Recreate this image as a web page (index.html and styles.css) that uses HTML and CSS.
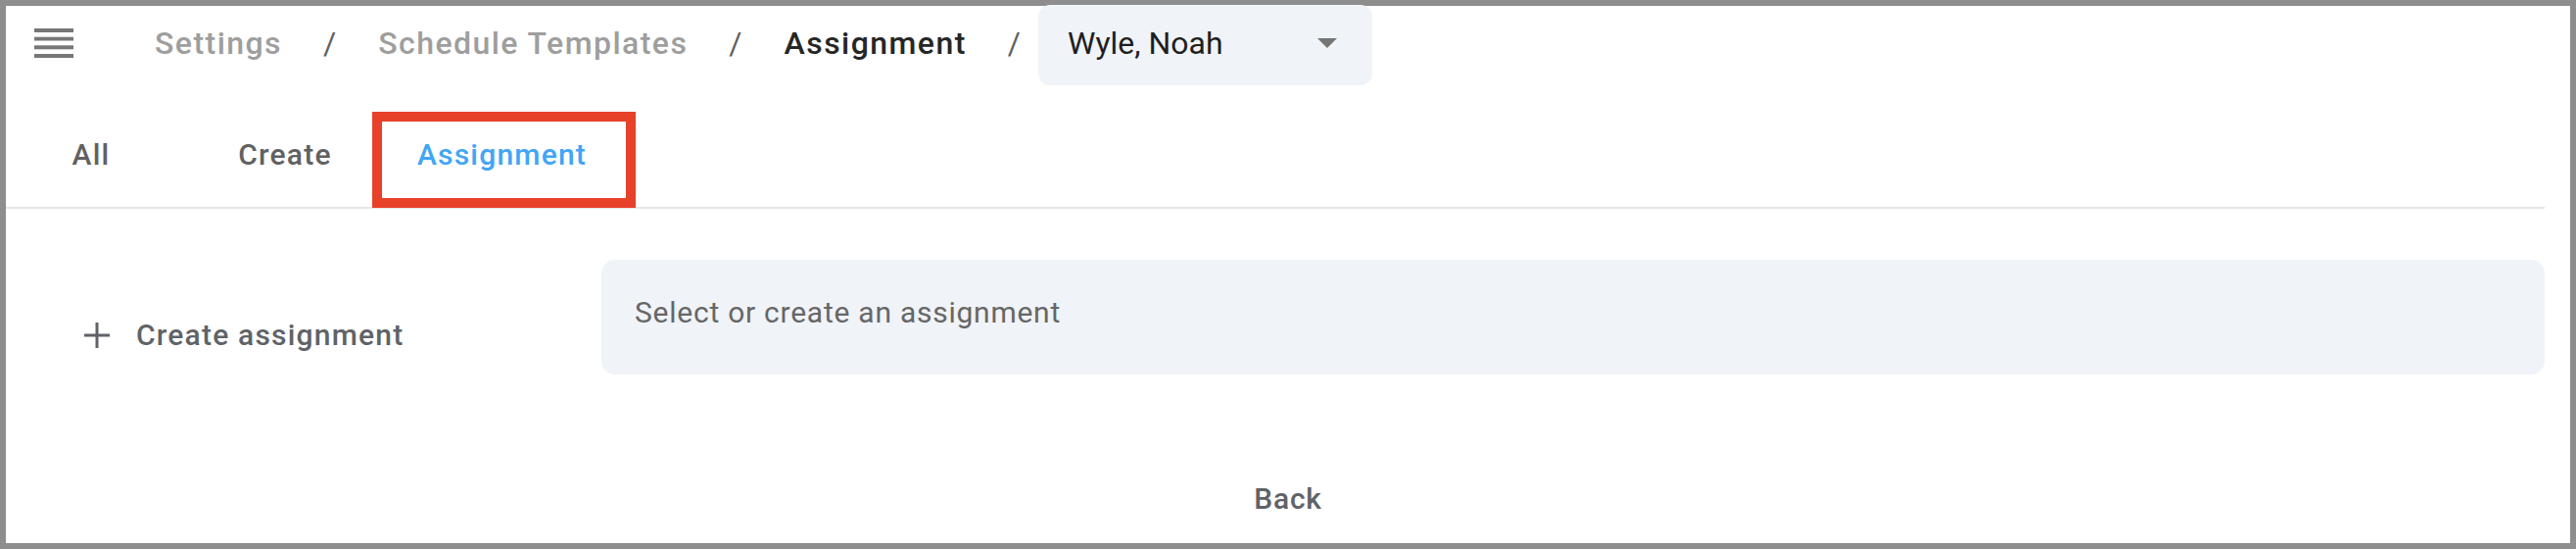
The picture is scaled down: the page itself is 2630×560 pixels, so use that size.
FILE: index.html
```html
<!DOCTYPE html>
<html lang="en">
<head>
<meta charset="utf-8">
<title>Assignment</title>
<link rel="stylesheet" href="styles.css">
</head>
<body>
<div class="frame">
  <header class="topbar">
    <span class="menu-icon" aria-label="Menu">
      <svg width="40" height="30" viewBox="0 0 40 30">
        <rect x="0" y="0" width="40" height="4" fill="#777777"/>
        <rect x="0" y="8.7" width="40" height="3.8" fill="#777777"/>
        <rect x="0" y="17.3" width="40" height="4" fill="#777777"/>
        <rect x="0" y="26" width="40" height="4" fill="#777777"/>
      </svg>
    </span>
    <nav class="crumbs">
      <span class="crumb">Settings</span>
      <span class="sep">/</span>
      <span class="crumb">Schedule Templates</span>
      <span class="sep">/</span>
      <span class="crumb crumb-current">Assignment</span>
      <span class="sep sep-last">/</span>
      <div class="picker">
        <span class="picker-value">Wyle, Noah</span>
        <span class="caret"></span>
      </div>
    </nav>
  </header>

  <div class="tabbar">
    <div class="tabs">
      <div class="tab">All</div>
      <div class="tab">Create</div>
      <div class="tab tab-active">Assignment<span class="highlight"></span></div>
    </div>
  </div>

  <section class="content">
    <div class="side">
      <button class="create-btn">
        <svg class="plus" width="26" height="26" viewBox="0 0 26 26">
          <rect x="11.5" y="0" width="3" height="26" fill="#5f6368"/>
          <rect x="0" y="11.5" width="26" height="3" fill="#5f6368"/>
        </svg>
        <span>Create assignment</span>
      </button>
    </div>
    <div class="select-box">Select or create an assignment</div>
  </section>

  <footer class="footer">
    <button class="back-btn">Back</button>
  </footer>
</div>
</body>
</html>
```
FILE: styles.css
```css
* { box-sizing: border-box; }

html, body {
  margin: 0;
  padding: 0;
  background: #ffffff;
}

body {
  font-family: Roboto, "Liberation Sans", Arial, sans-serif;
}

.frame {
  width: 2630px;
  height: 560px;
  border: 6px solid #8e8e8e;
  display: flex;
  flex-direction: column;
  background: #ffffff;
}

/* ---------- top bar ---------- */
.topbar {
  height: 79px;
  display: flex;
  align-items: center;
  padding-left: 29px;
  padding-bottom: 3px;
}

.menu-icon {
  display: flex;
  width: 40px;
  height: 30px;
  margin-right: 83px;
}

.crumbs {
  display: flex;
  align-items: center;
  height: 100%;
  font-size: 32px;
  letter-spacing: 1.45px;
}

.crumb {
  color: #9e9e9e;
  font-weight: 500;
}

.crumb-current {
  color: #262626;
}

.sep {
  color: #616161;
  font-weight: 400;
  letter-spacing: 0;
  margin: 0 43px 0 42px;
}

.sep-last {
  margin-right: 18px;
}

.picker {
  height: 82px;
  margin-bottom: -3px;
  width: 341px;
  background: #f0f3f8;
  border-radius: 12px;
  display: flex;
  align-items: center;
  justify-content: space-between;
  padding: 0 36px 0 30px;
}

.picker-value {
  color: #1f1f1f;
  font-weight: 400;
  letter-spacing: 0;
  padding-bottom: 3px;
}

.caret {
  width: 0;
  height: 0;
  border-left: 10px solid transparent;
  border-right: 10px solid transparent;
  border-top: 10px solid #757575;
  margin-bottom: 4px;
}

/* ---------- tabs ---------- */
.tabbar {
  margin-top: 29px;
  margin-right: 26px;
  border-bottom: 2px solid #e6e6e6;
}

.tabs {
  display: flex;
  margin-left: -12px;
}

.tab {
  position: relative;
  min-width: 198px;
  height: 97px;
  padding: 0 36px 10px;
  display: flex;
  align-items: center;
  justify-content: center;
  font-size: 30px;
  font-weight: 500;
  letter-spacing: 1.2px;
  color: #616161;
}

.tab-active {
  color: #42a5f5;
}

.highlight {
  position: absolute;
  left: -10px;
  right: -14px;
  top: 0;
  bottom: -1px;
  border: 10px solid #e8412a;
  z-index: 2;
}

/* ---------- content ---------- */
.content {
  display: grid;
  grid-template-columns: 608px 1fr;
  align-items: center;
  margin-top: 52px;
  margin-right: 26px;
}

.side {
  padding-left: 80px;
  padding-top: 36px;
}

.create-btn {
  display: flex;
  align-items: center;
  gap: 27px;
  border: 0;
  background: none;
  padding: 0;
  font-family: inherit;
  font-size: 30px;
  font-weight: 500;
  letter-spacing: 1.2px;
  color: #5f6368;
}

.plus {
  display: block;
}

.select-box {
  height: 117px;
  background: #f0f3f8;
  border-radius: 14px;
  display: flex;
  align-items: center;
  padding-left: 34px;
  padding-bottom: 10px;
  font-size: 30px;
  font-weight: 400;
  letter-spacing: 0.75px;
  color: #666666;
}

/* ---------- footer ---------- */
.footer {
  margin-top: auto;
  display: flex;
  justify-content: center;
  padding-bottom: 27px;
}

.back-btn {
  border: 0;
  background: none;
  padding: 0;
  height: 36px;
  line-height: 36px;
  font-family: inherit;
  font-size: 30px;
  font-weight: 500;
  letter-spacing: 0.8px;
  color: #5f6368;
}
```
